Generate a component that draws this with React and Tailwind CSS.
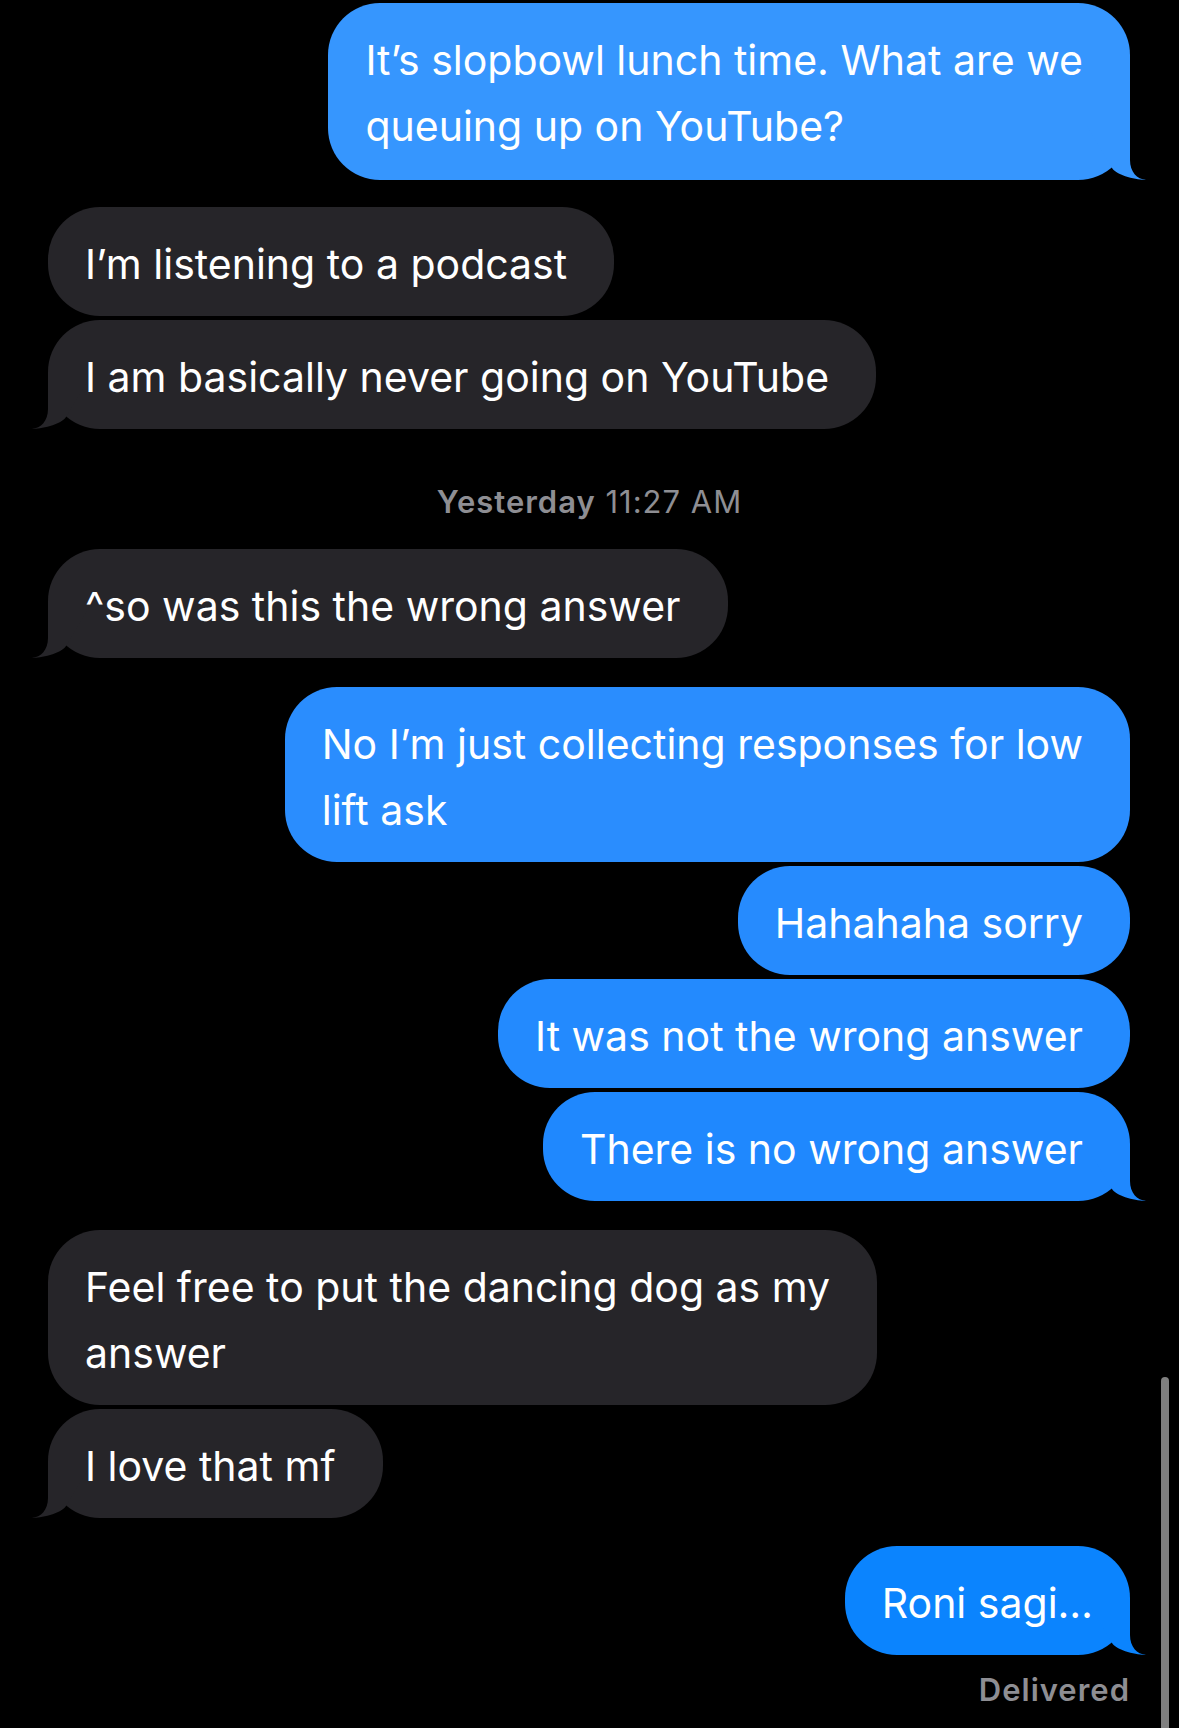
import React from "react";

const BLUE_TOP = "#3696fe";

function Tail({ side, color }) {
  // hook at the bottom corner of the last bubble in a run
  return (
    <svg
      width="60"
      height="54"
      viewBox="0 0 60 54"
      className={`absolute bottom-0 ${side === "right" ? "right-[-17px]" : "left-[-17px] -scale-x-100"}`}
    >
      <path d="M0 0 H43 V34 C43 46 50 53 59 54 C51 54 30 50 25 42 Z" fill={color} />
    </svg>
  );
}

function Bubble({ me, color, tail, lines, className = "pr-[47px]" }) {
  return (
    <div
      className={`relative rounded-[52px] pl-[37px] pt-[24px] pb-[19px] text-white text-[41px] leading-[66px] whitespace-nowrap ${className}`}
      style={{ backgroundColor: color }}
    >
      {tail && <Tail side={me ? "right" : "left"} color={color} />}
      {lines.map((l, i) => (
        <div key={i} className="relative">
          {l}
        </div>
      ))}
    </div>
  );
}

export default function App() {
  const gray = "#262529";

  return (
    <div
      className="relative w-[1179px] h-[1728px] bg-black overflow-hidden"
      style={{ fontFamily: "Inter, 'Noto Sans', sans-serif" }}
    >
      <div className="flex flex-col pt-[3px]">
        {/* sent */}
        <div className="flex flex-col items-end pr-[49px]">
          <Bubble me color={BLUE_TOP} tail lines={["It’s slopbowl lunch time. What are we", "queuing up on YouTube?"]} className="pr-[47px] pb-[21px]" />
        </div>

        {/* received */}
        <div className="flex flex-col items-start gap-[4px] pl-[48px] mt-[27px]">
          <Bubble color={gray} lines={["I’m listening to a podcast"]} />
          <Bubble color={gray} tail lines={["I am basically never going on YouTube"]} />
        </div>

        <div className="mt-[55px] text-center text-[31px] leading-[36px] tracking-[1px] text-[#8e8e93]">
          <span className="font-semibold">Yesterday</span> 11:27 AM
        </div>

        <div className="flex flex-col items-start pl-[48px] mt-[29px]">
          <Bubble color={gray} tail lines={["^so was this the wrong answer"]} />
        </div>

        <div className="flex flex-col items-end gap-[4px] pr-[49px] mt-[29px]">
          <Bubble me color="#2a8dfe" lines={["No I’m just collecting responses for low", "lift ask"]} />
          <Bubble me color="#268bfe" lines={["Hahahaha sorry"]} />
          <Bubble me color="#238afe" lines={["It was not the wrong answer"]} />
          <Bubble me color="#1f88fe" tail lines={["There is no wrong answer"]} />
        </div>

        <div className="flex flex-col items-start gap-[4px] pl-[48px] mt-[29px]">
          <Bubble color={gray} lines={["Feel free to put the dancing dog as my", "answer"]} />
          <Bubble color={gray} tail lines={["I love that mf"]} />
        </div>

        <div className="flex flex-col items-end pr-[49px] mt-[28px]">
          <Bubble me color="#0b84fe" tail lines={["Roni sagi…"]} className="pr-[37px]" />
          <div className="mt-[17px] text-[31px] leading-[36px] tracking-[1px] font-semibold text-[#8e8e93]">Delivered</div>
        </div>
      </div>

      {/* scroll indicator */}
      <div className="absolute right-[10px] top-[1377px] w-[8px] h-[370px] rounded-full bg-[#7f7f7f]" />
    </div>
  );
}
